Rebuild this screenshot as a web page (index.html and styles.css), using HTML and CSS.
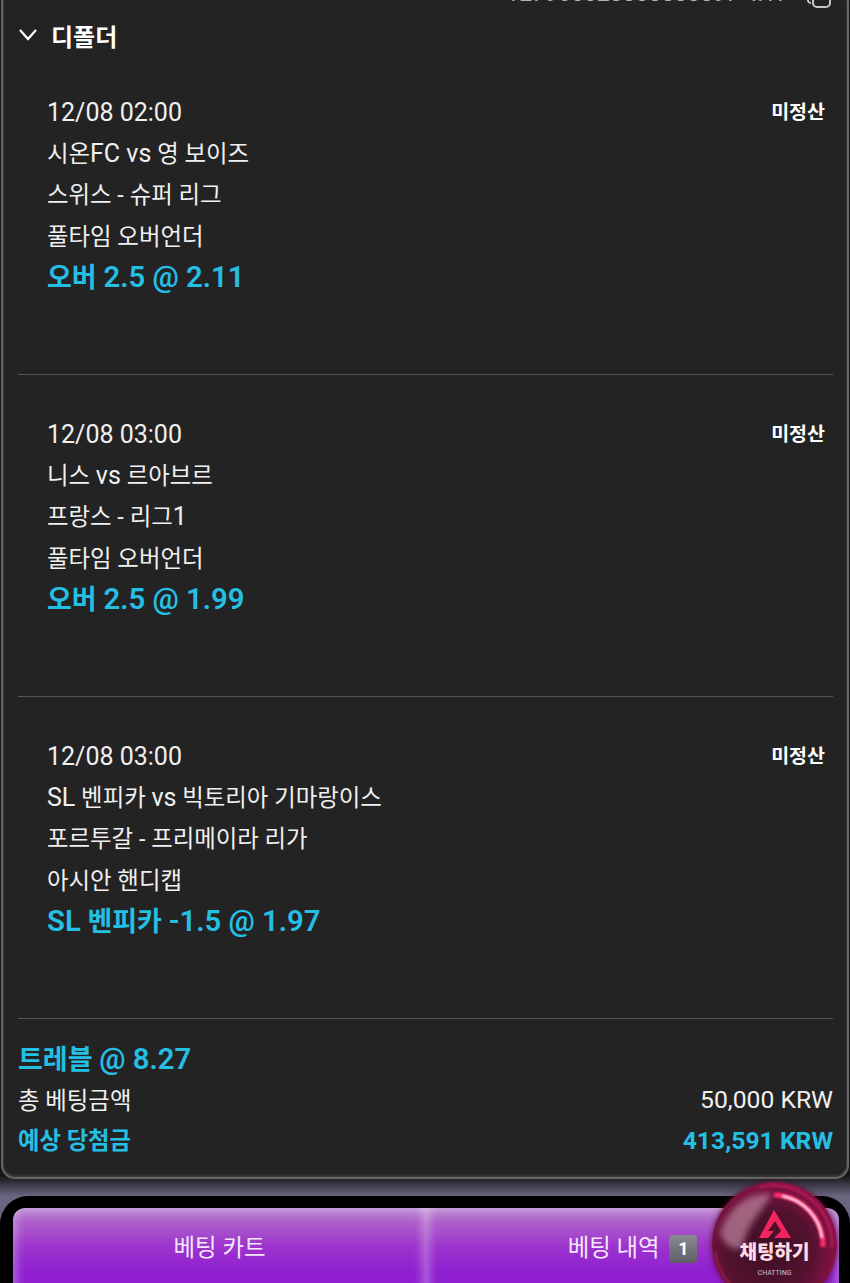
FILE: index.html
```html
<!DOCTYPE html>
<html lang="ko">
<head>
<meta charset="utf-8">
<title>베팅</title>
<link rel="stylesheet" href="styles.css">
</head>
<body>
<div class="screen">
  <main class="card">
    <div class="idrow">
      <span class="idtext">127960028888888897 4:17</span>
      <svg class="copy" width="26" height="9" viewBox="0 0 26 9"><path d="M1 0v1a3 3 0 0 0 3 2M6 0v3a4 4 0 0 0 4 4h9a4 4 0 0 0 4-4V0" fill="none" stroke="#c8c8c8" stroke-width="2"/></svg>
    </div>
    <div class="head">
      <svg class="chev" width="20" height="14" viewBox="0 0 20 14"><path d="M2 2l8 9 8-9" fill="none" stroke="#fff" stroke-width="2.2"/></svg>
      <span>디폴더</span>
    </div>
    <section class="bet first">
      <div class="line top"><span class="lat">12/08 02:00</span><b class="status">미정산</b></div>
      <div class="line">시온<span class="lat">FC vs</span> 영 보이즈</div>
      <div class="line">스위스 - 슈퍼 리그</div>
      <div class="line">풀타임 오버언더</div>
      <div class="pick">오버 <span class="lat">2.5 @ 2.11</span></div>
    </section>
    <section class="bet">
      <div class="line top"><span class="lat">12/08 03:00</span><b class="status">미정산</b></div>
      <div class="line">니스 <span class="lat">vs</span> 르아브르</div>
      <div class="line">프랑스 - 리그<span class="lat">1</span></div>
      <div class="line">풀타임 오버언더</div>
      <div class="pick">오버 <span class="lat">2.5 @ 1.99</span></div>
    </section>
    <section class="bet">
      <div class="line top"><span class="lat">12/08 03:00</span><b class="status">미정산</b></div>
      <div class="line"><span class="lat">SL</span> 벤피카 <span class="lat">vs</span> 빅토리아 기마랑이스</div>
      <div class="line">포르투갈 - 프리메이라 리가</div>
      <div class="line">아시안 핸디캡</div>
      <div class="pick"><span class="lat">SL</span> 벤피카 <span class="lat">-1.5 @ 1.97</span></div>
    </section>
    <div class="summary">
      <div class="pick">트레블 <span class="lat">@ 8.27</span></div>
      <div class="line top"><span>총 베팅금액</span><span class="lat">50,000 KRW</span></div>
      <div class="line top win"><span class="winlabel">예상 당첨금</span><span class="lat">413,591 KRW</span></div>
    </div>
  </main>
  <footer class="bar">
    <div class="tabs">
      <button class="tab">베팅 카트</button>
      <button class="tab">베팅 내역 <span class="count">1</span></button>
    </div>
  </footer>
  <div class="chat">
    <svg class="ball" width="125" height="125" viewBox="0 0 125 125">
      <defs>
        <filter id="soft" x="-30%" y="-30%" width="160%" height="160%"><feGaussianBlur stdDeviation="3"/></filter>
        <filter id="soft2" x="-30%" y="-30%" width="160%" height="160%"><feGaussianBlur stdDeviation="0.8"/></filter>
      </defs>
      <path d="M8 50C18 24 36 10 60 12 50 30 36 40 30 66 20 70 10 60 8 50z" fill="#d29ab4" opacity=".6" filter="url(#soft)"/>
      <path d="M62 13a50 50 0 0 1 49 52" fill="none" stroke="#ff2a6d" stroke-width="5" filter="url(#soft2)"/>
      <path d="M70 14a49 49 0 0 1 40 42" fill="none" stroke="#ffe3ec" stroke-width="2.5" filter="url(#soft2)"/>
      <path d="M48 5a59 59 0 0 1 72 60" fill="none" stroke="#ff2a6d" stroke-width="2" opacity=".5" filter="url(#soft2)"/>
      <path d="M3 70a60 60 0 0 0 30 44" fill="none" stroke="#e0246a" stroke-width="2" opacity=".5" filter="url(#soft2)"/>
    </svg>
    <svg class="logo" width="32" height="28" viewBox="0 0 32 28"><path d="M15 0L32 28H15l7-7-6-10-7 10h6L9 28H0z" fill="#f5245f"/></svg>
    <div class="chat-ko">채팅하기</div>
    <div class="chat-en">CHATTING</div>
  </div>
</div>
</body>
</html>
```
FILE: styles.css
```css
* { box-sizing: border-box; }
html, body { margin: 0; padding: 0; }
body { background: #000; font-family: Roboto, "Noto Sans CJK KR", sans-serif; }
.screen {
  position: relative; width: 850px; height: 1283px; overflow: hidden;
  background: linear-gradient(#17171a 0, #17171a 1176px, #6a6680 1196px);
}
.card {
  height: 1179px; margin: 0 1px; padding: 0 14px 0 15px;
  background: #232323; border: 2px solid #666; border-top: 0;
  border-radius: 0 0 14px 14px; color: #f2f2f2;
  box-shadow: inset 0 -2px 2px #3a3a3a, inset 1px 0 1px #3a3a3a, inset -1px 0 1px #3a3a3a;
}
.idrow { height: 9px; display: flex; justify-content: flex-end; align-items: flex-start; gap: 18px; overflow: hidden; }
.idtext { font-size: 23px; line-height: 24px; color: #b5b5b5; flex: none; transform: translateY(-18px); }
.copy { flex: none; }
.head { height: 52px; display: flex; align-items: center; gap: 13px; font-size: 24px; font-weight: 700; color: #fff; }
.chev { flex: none; }
.bet { height: 322px; padding: 39px 0 0 29px; border-bottom: 1px solid #555; }
.bet.first { height: 314px; padding-top: 31px; }
.line { font-size: 23.4px; line-height: 41.5px; height: 41.5px; white-space: nowrap; color: #f0f0f0; }
.lat { font-size: 25px; line-height: 1; }
.top { display: flex; justify-content: space-between; align-items: center; }
.status { font-size: 19.5px; font-weight: 700; color: #fff; margin-right: 8px; }
.pick { font-size: 27px; line-height: 41.5px; height: 41.5px; font-weight: 700; color: #25bfe4; white-space: nowrap; }
.pick .lat { font-size: 29.3px; font-weight: 600; }
.summary { padding-top: 21px; }
.summary .pick { height: 40.5px; }
.summary .line { height: 40.5px; line-height: 40.5px; }
.summary .lat { font-size: 24.7px; }
.summary .pick .lat { font-size: 29.3px; }
.win { color: #25bfe4; font-weight: 700; }
.winlabel { font-size: 23.3px; }
.bar {
  position: absolute; left: 0; right: 0; top: 1196px; height: 87px; padding: 12px 11px 0 13px;
  background: #000; border-radius: 28px 28px 0 0;
}
.tabs { display: flex; height: 80px; border-radius: 12px 12px 0 0; overflow: hidden; }
.tab {
  flex: 1; height: 80px; border: 0; padding: 0 0 4px; color: #f6e6fb; font: 400 23.4px Roboto, "Noto Sans CJK KR", sans-serif;
  background: linear-gradient(#c295d6 0, #ae62cb 16%, #9c34cc 48%, #8f1fd0 80%);
  box-shadow: inset 8px 0 10px -4px rgba(255,255,255,.3), inset -8px 0 10px -4px rgba(255,255,255,.3);
}
.count {
  display: inline-block; width: 28px; height: 28px; margin-left: 4px; line-height: 28px; font-size: 18px; font-weight: 700; color: #fff;
  background: linear-gradient(#8a8a92, #5e5e66); border-radius: 3px; vertical-align: 1px;
}
.chat {
  position: absolute; left: 712px; top: 1182px; width: 125px; height: 125px; border-radius: 50%; overflow: hidden;
  background: radial-gradient(circle at 45% 55%, #3d0f24 0, #54122f 45%, #8a1248 72%, #a81450 84%, #6a0f34 92%, #2a0c1a 100%);
  box-shadow: 0 0 6px #5a1030; text-align: center; color: #fff; padding-top: 28px;
}
.ball { position: absolute; left: 0; top: 0; }
.logo { position: relative; display: block; margin: 0 auto; }
.chat-ko { position: relative; font-size: 19px; line-height: 24px; font-weight: 900; margin-top: 3px; color: #ffdbe6; }
.chat-en { position: relative; font-size: 7px; line-height: 12px; margin-top: 2px; color: #cfc3c8; }
```
